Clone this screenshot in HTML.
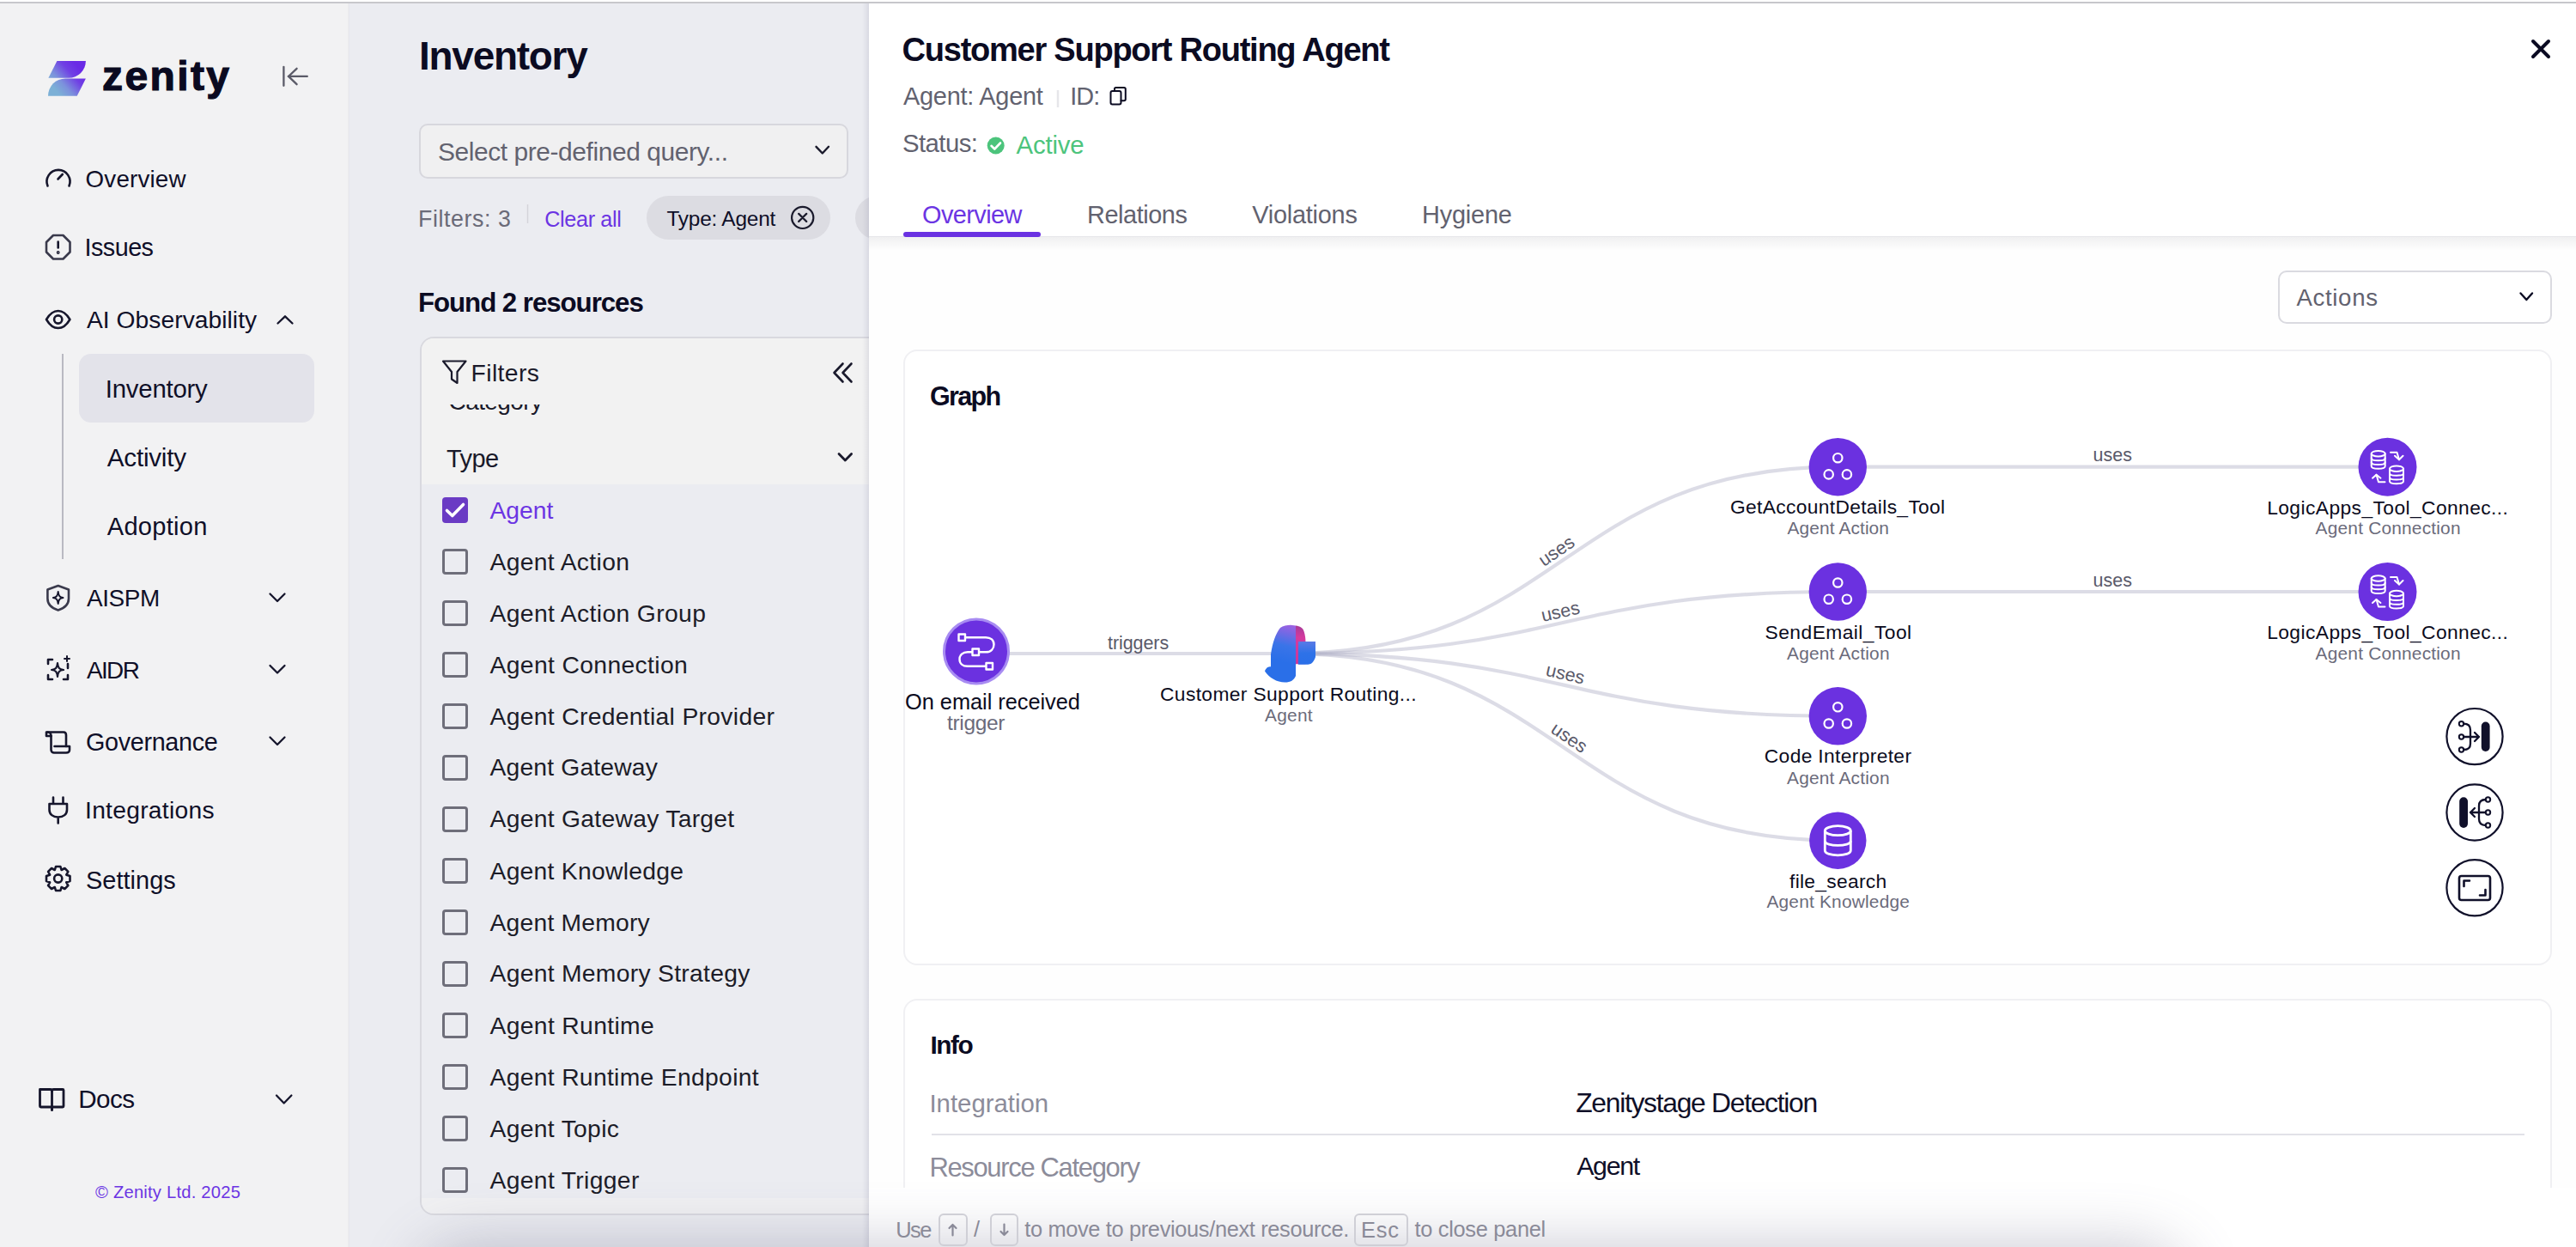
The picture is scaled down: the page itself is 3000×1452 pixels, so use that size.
<!DOCTYPE html>
<html><head><meta charset="utf-8">
<style>
html,body{margin:0;padding:0;}
body{width:3000px;height:1452px;overflow:hidden;position:relative;background:#fff;font-family:"Liberation Sans",sans-serif;}
.a{position:absolute;box-sizing:border-box;}
.t{position:absolute;white-space:nowrap;line-height:1;font-family:"Liberation Sans",sans-serif;}
svg{position:absolute;overflow:visible;}
</style></head><body>
<!-- top rule -->
<div class="a" style="left:0;top:2px;width:3000px;height:2px;background:#c7c7cb"></div>
<!-- sidebar -->
<div class="a" style="left:0;top:4px;width:406px;height:1448px;background:#f2f2f3"></div>
<!-- main -->
<div class="a" style="left:406px;top:4px;width:606px;height:1448px;background:#ebecf1"></div>
<div class="a" style="left:405px;top:4px;width:3px;height:1448px;background:linear-gradient(to right,rgba(0,0,0,0.03),rgba(0,0,0,0))"></div>
<!-- sidebar highlight & line -->
<div class="a" style="left:92px;top:412px;width:274px;height:80px;border-radius:14px;background:#e3e3ea"></div>
<div class="a" style="left:72px;top:412px;width:2px;height:239px;background:#b9b9c2"></div>
<!-- logo -->
<svg style="left:0;top:0" width="400" height="140" viewBox="0 0 400 140">
 <defs><linearGradient id="lg" gradientUnits="userSpaceOnUse" x1="92" y1="79" x2="64" y2="104">
  <stop offset="0" stop-color="#6a2ae6"/><stop offset="0.3" stop-color="#7040e4"/><stop offset="0.7" stop-color="#7c92dc"/><stop offset="1" stop-color="#7cb0d6"/></linearGradient></defs>
 <path d="M66.4 71 H99.9 A20 19.8 0 0 1 80 90.8 H56.4 Z" fill="url(#lg)"/>
 <path d="M89.7 111.7 H56 A20 20.3 0 0 1 76 91.4 H99.9 Z" fill="url(#lg)"/>
 <text x="119" y="104.7" font-family="Liberation Sans" font-weight="700" font-size="48" letter-spacing="2.4" fill="#0a0a20" stroke="#0a0a20" stroke-width="1.2">zenity</text>
 <g stroke="#5b5b68" stroke-width="2.3" stroke-linecap="round" fill="none">
  <path d="M330.4 77.8 V99.8"/><path d="M336 88.9 H357.8"/><path d="M345.6 79.8 L336 88.9 L345.6 98.2"/>
 </g>
</svg>
<!-- sidebar icons -->
<svg style="left:0;top:0" width="406" height="1452" viewBox="0 0 406 1452">
 <g stroke="#16162c" stroke-width="2.6" fill="none" stroke-linecap="round" stroke-linejoin="round">
  <!-- overview gauge -->
  <path d="M55.5 216.5 A13.5 13.5 0 1 1 80.5 216.5"/><path d="M67.5 208.5 L72.8 203"/>
  <!-- issues octagon -->
  <path d="M62 274 L73.5 274 L81.5 282 L81.5 293.5 L73.5 301.5 L62 301.5 L54 293.5 L54 282 Z" stroke="#3a3a4c"/>
  <path d="M67.7 281.5 V288.5"/><circle cx="67.7" cy="294" r="0.6" fill="#16162c"/>
  <!-- eye -->
  <path d="M54 372 C59 363.5 63 362 67.7 362 C72.4 362 76.4 363.5 81.4 372 C76.4 380.5 72.4 382 67.7 382 C63 382 59 380.5 54 372 Z"/>
  <circle cx="67.7" cy="372" r="4.6"/>
  <!-- chevron up -->
  <path d="M323.5 376.5 L332 368.3 L340.5 376.5" stroke-width="2.3"/>
  <!-- aispm shield -->
  <path d="M67.7 682 L80 686.5 V697 C80 704 74 708.5 67.7 710.5 C61.4 708.5 55.4 704 55.4 697 V686.5 Z" stroke="#3a3a4c"/>
  <path d="M67.7 689 C68.3 694 69.5 695.3 73.5 696 C69.5 696.7 68.3 698 67.7 703 C67.1 698 65.9 696.7 61.9 696 C65.9 695.3 67.1 694 67.7 689 Z" stroke-width="2"/>
  <!-- aidr -->
  <path d="M56 773 V768 H61 M56 786 V791 H61 M74 791 H79 V786 M79 778 V773" stroke-width="2.6"/>
  <path d="M67 772 C67.6 778 69 779.4 74 780 C69 780.6 67.6 782 67 788 C66.4 782 65 780.6 60 780 C65 779.4 66.4 778 67 772 Z" stroke-width="2.2"/>
  <path d="M78 764 V770 M75 767 H81" stroke-width="2"/>
  <!-- governance scroll -->
  <path d="M54 852.5 H74 C76.5 852.5 77 854 77 856 V869 H81 V873 C81 875.5 79.5 876.5 77 876.5 H63 C61 876.5 59.5 875 59.5 873 V857 H54 C54 854 54 852.5 54 852.5 Z"/>
  <path d="M59.5 857 C59.5 854.5 58 852.5 55.5 852.5"/><path d="M63.5 869 H77"/>
  <!-- integrations plug -->
  <path d="M62 928.5 V936 M73.5 928.5 V936 M57.5 936 H78 V943 C78 948 74 951.5 67.7 951.5 C61.5 951.5 57.5 948 57.5 943 Z M67.7 951.5 V958.5"/>
  <!-- settings gear -->
  <circle cx="67.7" cy="1023" r="4.6"/>
  <path d="M65 1009 H70.4 L71.6 1013 L75.4 1011 L79.3 1014.9 L77.3 1018.7 L81.5 1020 V1026 L77.3 1027.3 L79.3 1031.1 L75.4 1035 L71.6 1033 L70.4 1037 H65 L63.8 1033 L60 1035 L56.1 1031.1 L58.1 1027.3 L54 1026 V1020 L58.1 1018.7 L56.1 1014.9 L60 1011 L63.8 1013 Z"/>
  <!-- chevrons down -->
  <path d="M314.5 691.5 L323 700 L331.5 691.5" stroke-width="2.3"/>
  <path d="M314.5 775 L323 783.5 L331.5 775" stroke-width="2.3"/>
  <path d="M314.5 858.5 L323 867 L331.5 858.5" stroke-width="2.3"/>
  <path d="M322 1275.5 L330.7 1284.5 L339.4 1275.5" stroke-width="2.3"/>
  <!-- docs book -->
  <path d="M46.5 1268.5 H58.5 C59.8 1268.5 60.5 1269.3 60.5 1270.5 V1289 H47.5 C46.8 1289 46.5 1288.5 46.5 1288 Z" stroke-width="2.8"/>
  <path d="M60.5 1270.5 C60.5 1269.3 61.2 1268.5 62.5 1268.5 H73 C73.7 1268.5 74 1269 74 1269.5 V1288 C74 1288.5 73.7 1289 73 1289 H60.5" stroke-width="2.8"/>
  <path d="M60.5 1289 V1292.5" stroke-width="3"/>
 </g>
</svg>
<!-- main: dropdown -->
<div class="a" style="left:488px;top:144px;width:500px;height:64px;border:2px solid #d7d7dd;border-radius:10px;background:#f0f0f1"></div>

<div class="a" style="left:753px;top:228px;width:214px;height:51px;border-radius:26px;background:#dcdce2"></div>
<div class="a" style="left:996px;top:228px;width:60px;height:51px;border-radius:26px;background:#dcdce2"></div>
<!-- filter panel -->
<div class="a" style="left:489px;top:392px;width:620px;height:1023px;border:2px solid #d9d9df;border-radius:16px;background:#ebecf1;overflow:hidden">
  <div class="a" style="left:0;top:0;width:620px;height:170px;background:#f2f2f2"></div>
  <div class="a" style="left:0;top:1001px;width:620px;height:30px;background:#f0f0f2"></div>
</div>
<svg style="left:0;top:0" width="1012" height="600">
 <g stroke="#1a1a2c" stroke-width="2.4" fill="none" stroke-linecap="round" stroke-linejoin="round">
  <path d="M950.5 170.8 L957.8 178.5 L965 170.8"/>
  <!-- chip x icon -->
  <circle cx="934.7" cy="253.4" r="12.6" stroke-width="2.2"/>
  <path d="M930.2 248.9 L939.2 257.9 M939.2 248.9 L930.2 257.9" stroke-width="2.2"/>
  <!-- filter funnel -->
  <path d="M516 420.5 H542.5 L532.5 433 V446 L526 441.5 V433 Z" stroke-width="2.2"/>
  <!-- « -->
  <path d="M981.5 423.5 L971.5 434 L981.5 444.5 M991.5 423.5 L981.5 434 L991.5 444.5" stroke-width="2.6"/>
  <!-- type chevron -->
  <path d="M977 528.5 L984.3 536 L991.6 528.5" stroke-width="2.8"/>
 </g>
 <path d="M614.5 238 V260" stroke="#d4d4da" stroke-width="1.5"/>
</svg>
<div class="a" style="left:489px;top:471px;width:522px;height:30px;overflow:hidden">
 <div class="t" style="left:33.6px;top:-17.5px;font-size:28px;letter-spacing:-0.6px;color:#1a1a2a">Category</div>
</div>
<!-- checkboxes -->
<div class="a" style="left:515px;top:579px;width:30px;height:30px;border-radius:4px;background:#6a3bc4"></div>
<svg style="left:515px;top:579px" width="30" height="30"><path d="M5.5 15.5 L11.8 21.5 L24.5 8.5" stroke="#fff" stroke-width="3.6" fill="none" stroke-linecap="round" stroke-linejoin="round"/></svg>
<div class="a" style="left:515px;top:639px;width:30px;height:30px;border-radius:4px;border:3px solid #6e6e7a"></div>
<div class="a" style="left:515px;top:699px;width:30px;height:30px;border-radius:4px;border:3px solid #6e6e7a"></div>
<div class="a" style="left:515px;top:759px;width:30px;height:30px;border-radius:4px;border:3px solid #6e6e7a"></div>
<div class="a" style="left:515px;top:819px;width:30px;height:30px;border-radius:4px;border:3px solid #6e6e7a"></div>
<div class="a" style="left:515px;top:879px;width:30px;height:30px;border-radius:4px;border:3px solid #6e6e7a"></div>
<div class="a" style="left:515px;top:939px;width:30px;height:30px;border-radius:4px;border:3px solid #6e6e7a"></div>
<div class="a" style="left:515px;top:999px;width:30px;height:30px;border-radius:4px;border:3px solid #6e6e7a"></div>
<div class="a" style="left:515px;top:1059px;width:30px;height:30px;border-radius:4px;border:3px solid #6e6e7a"></div>
<div class="a" style="left:515px;top:1119px;width:30px;height:30px;border-radius:4px;border:3px solid #6e6e7a"></div>
<div class="a" style="left:515px;top:1179px;width:30px;height:30px;border-radius:4px;border:3px solid #6e6e7a"></div>
<div class="a" style="left:515px;top:1239px;width:30px;height:30px;border-radius:4px;border:3px solid #6e6e7a"></div>
<div class="a" style="left:515px;top:1299px;width:30px;height:30px;border-radius:4px;border:3px solid #6e6e7a"></div>
<div class="a" style="left:515px;top:1359px;width:30px;height:30px;border-radius:4px;border:3px solid #6e6e7a"></div>
<!-- main bottom shadow -->

<!-- PANEL -->
<div class="a" style="left:1004px;top:4px;width:8px;height:1448px;background:linear-gradient(to right,rgba(120,120,150,0),rgba(120,120,150,0.07) 50%,rgba(120,120,150,0.16))"></div>
<div class="a" style="left:1012px;top:4px;width:1988px;height:1448px;background:#fefefe"></div>
<div class="a" style="left:1012px;top:276px;width:1988px;height:16px;background:linear-gradient(to bottom,rgba(0,0,20,0.055),rgba(0,0,20,0))"></div>
<div class="a" style="left:1012px;top:4px;width:1988px;height:272px;background:#fff;border-bottom:1px solid #e6e6ea"></div>
<div class="a" style="left:1052px;top:270px;width:160px;height:6px;border-radius:3px;background:#6a32e2"></div>
<div class="a" style="left:2653px;top:315px;width:319px;height:62px;border:2px solid #dadae0;border-radius:10px;background:#fff"></div>
<div class="a" style="left:1052px;top:407px;width:1920px;height:717px;border:2px solid #f0f0f3;border-radius:16px;background:#fff"></div>
<div class="a" style="left:1052px;top:1163px;width:1920px;height:400px;border:2px solid #f0f0f3;border-radius:16px;background:#fff"></div>
<div class="a" style="left:1085px;top:1320px;width:1855px;height:2px;background:#e2e2e8"></div>
<svg style="left:0;top:0" width="3000" height="420">
 <g stroke="#0b0b22" fill="none" stroke-linecap="round" stroke-linejoin="round">
  <path d="M2950 48 L2968 66 M2968 48 L2950 66" stroke-width="4"/>
  <path d="M2935.5 341.5 L2942.3 349 L2949 341.5" stroke-width="2.4"/>
  <!-- copy icon -->
  <rect x="1293.5" y="106" width="12" height="15.5" rx="2" stroke-width="2"/>
  <path d="M1298 106 V103.5 C1298 102.5 1298.5 102 1299.5 102 H1309 C1310 102 1310.8 102.7 1310.8 103.7 V115.5 C1310.8 116.5 1310 117.3 1309 117.3 H1305.5" stroke-width="2"/>
 </g>
 <path d="M1232 105 V125" stroke="#e6e6ea" stroke-width="2.5"/>
 <circle cx="1159.7" cy="169.5" r="10" fill="#4cc47c"/>
 <path d="M1154.5 169.8 L1158.3 173.5 L1165 166.5" stroke="#fff" stroke-width="2.6" fill="none" stroke-linecap="round" stroke-linejoin="round"/>
</svg>
<!-- GRAPH -->
<svg style="left:0;top:0" width="3000" height="1452" viewBox="0 0 3000 1452">
<path d="M1137 761 H1500" stroke="#b2b2c8" stroke-opacity="0.45" stroke-width="4.2" fill="none"/>
<path d="M1500 761 C1820.15 761 1820.15 543.7 2140.3 543.7" stroke="#b2b2c8" stroke-opacity="0.45" stroke-width="4.2" fill="none"/>
<path d="M1500 761 C1820.15 761 1820.15 689 2140.3 689" stroke="#b2b2c8" stroke-opacity="0.45" stroke-width="4.2" fill="none"/>
<path d="M1500 761 C1820.15 761 1820.15 833.8 2140.3 833.8" stroke="#b2b2c8" stroke-opacity="0.45" stroke-width="4.2" fill="none"/>
<path d="M1500 761 C1820.15 761 1820.15 978.7 2140.3 978.7" stroke="#b2b2c8" stroke-opacity="0.45" stroke-width="4.2" fill="none"/>
<path d="M2140.3 543.7 H2780" stroke="#b2b2c8" stroke-opacity="0.45" stroke-width="4.2" fill="none"/>
<path d="M2140.3 689 H2780" stroke="#b2b2c8" stroke-opacity="0.45" stroke-width="4.2" fill="none"/>
<text x="1812.8" y="641.6" transform="rotate(-34.18 1812.8 641.6)" text-anchor="middle" dominant-baseline="central" font-family="Liberation Sans" font-size="21.5" fill="#5a5a6a">uses</text>
<text x="1817.3" y="712.3" transform="rotate(-12.68 1817.3 712.3)" text-anchor="middle" dominant-baseline="central" font-family="Liberation Sans" font-size="21.5" fill="#5a5a6a">uses</text>
<text x="1823.0" y="784.7" transform="rotate(12.82 1823.0 784.7)" text-anchor="middle" dominant-baseline="central" font-family="Liberation Sans" font-size="21.5" fill="#5a5a6a">uses</text>
<text x="1827.5" y="859.1" transform="rotate(34.23 1827.5 859.1)" text-anchor="middle" dominant-baseline="central" font-family="Liberation Sans" font-size="21.5" fill="#5a5a6a">uses</text>
<circle cx="1137" cy="758.4" r="37.5" fill="#6b31e0" stroke="#a88cf2" stroke-width="3"/>
<g stroke="#fff" stroke-width="2.4" fill="none" stroke-linejoin="round"><rect x="1116.5" y="738.5" width="7.5" height="7.5"/><rect x="1132.5" y="755.5" width="7.5" height="7.5"/><rect x="1148.5" y="772" width="7.5" height="7.5"/><path d="M1124 742.3 H1148 C1154 742.3 1157.5 745.5 1157.5 750.5 C1157.5 755.5 1154 759.3 1148 759.3 H1140"/><path d="M1132.5 759.3 H1127 C1121 759.3 1117.5 763 1117.5 767.5 C1117.5 772.5 1121 775.8 1127 775.8 H1148.5"/></g>
<defs><linearGradient id="ag1" gradientUnits="userSpaceOnUse" x1="1500" y1="728" x2="1490" y2="770"><stop offset="0" stop-color="#9a62e2"/><stop offset="0.55" stop-color="#3a74e8"/><stop offset="1" stop-color="#2a6fe8"/></linearGradient><linearGradient id="ag2" gradientUnits="userSpaceOnUse" x1="0" y1="729" x2="0" y2="773"><stop offset="0" stop-color="#a83a98"/><stop offset="0.3" stop-color="#d53a9e"/><stop offset="1" stop-color="#c8389c"/></linearGradient><linearGradient id="ag3" gradientUnits="userSpaceOnUse" x1="0" y1="747" x2="0" y2="774"><stop offset="0" stop-color="#5a7ae6"/><stop offset="0.5" stop-color="#2e72e8"/><stop offset="1" stop-color="#2a6fe8"/></linearGradient></defs>
<path d="M1509 728.5 C1514 729 1517 731 1518.5 735 C1520 739 1520.5 744 1520.5 748 V773.2 H1506 Z" fill="url(#ag2)"/>
<path d="M1491 731 C1494 728.5 1499 727.8 1503 727.8 L1509 728.5 V787 C1507 792 1503 794.6 1496.5 794.6 C1487 794.6 1478 789 1473 781.5 C1474.5 777.5 1477 776.3 1480 776.3 V762 C1482 748 1486 737 1491 731 Z" fill="url(#ag1)"/>
<path d="M1512 747 H1532 V765 C1530 771 1527 773.7 1523 773.7 H1512 Z" fill="url(#ag3)"/>
<circle cx="2140.3" cy="543.7" r="33.7" fill="#6b31e0"/>
<g stroke="#fff" stroke-width="2.2" fill="none"><circle cx="2140.3" cy="533.2" r="5.2"/><circle cx="2129.7000000000003" cy="552.4000000000001" r="5.2"/><circle cx="2150.9" cy="552.4000000000001" r="5.2"/></g>
<circle cx="2140.3" cy="689" r="33.7" fill="#6b31e0"/>
<g stroke="#fff" stroke-width="2.2" fill="none"><circle cx="2140.3" cy="678.5" r="5.2"/><circle cx="2129.7000000000003" cy="697.7" r="5.2"/><circle cx="2150.9" cy="697.7" r="5.2"/></g>
<circle cx="2140.3" cy="833.8" r="33.7" fill="#6b31e0"/>
<g stroke="#fff" stroke-width="2.2" fill="none"><circle cx="2140.3" cy="823.3" r="5.2"/><circle cx="2129.7000000000003" cy="842.5" r="5.2"/><circle cx="2150.9" cy="842.5" r="5.2"/></g>
<circle cx="2140.3" cy="978.7" r="33.2" fill="#6b31e0"/>
<g stroke="#fff" stroke-width="2.8" fill="none"><ellipse cx="2140.3" cy="967.2" rx="15" ry="5.5"/><path d="M2125.3 967.2 V990.2 C2125.3 997.7 2155.3 997.7 2155.3 990.2 V967.2"/><path d="M2125.3 979.2 C2125.3 986.2 2155.3 986.2 2155.3 979.2"/></g>
<circle cx="2780.5" cy="543.7" r="34" fill="#6b31e0"/>
<g stroke="#fff" stroke-width="2" fill="none" stroke-linecap="round" stroke-linejoin="round"><ellipse cx="2769.7" cy="528.2" rx="8" ry="3.2"/><path d="M2761.7 528.2 V542.7 C2761.7 546.7 2777.7 546.7 2777.7 542.7 V528.2"/><path d="M2761.7 533.4000000000001 C2761.7 537.2 2777.7 537.2 2777.7 533.4000000000001"/><path d="M2761.7 538.2 C2761.7 542.0 2777.7 542.0 2777.7 538.2"/><ellipse cx="2791.0" cy="545.7" rx="8" ry="3.2"/><path d="M2783.0 545.7 V560.2 C2783.0 564.2 2799.0 564.2 2799.0 560.2 V545.7"/><path d="M2783.0 550.9000000000001 C2783.0 554.7 2799.0 554.7 2799.0 550.9000000000001"/><path d="M2783.0 555.7 C2783.0 559.5 2799.0 559.5 2799.0 555.7"/><path d="M2784.0 526.7 H2791.5 L2794.0 535.2"/><path d="M2789.0 530.7 L2794.0 535.2 L2798.5 530.7"/><path d="M2777.5 561.2 H2770.0 L2767.5 552.7"/><path d="M2772.5 556.7 L2767.5 552.7 L2763.0 556.7"/></g>
<circle cx="2780.5" cy="689" r="34" fill="#6b31e0"/>
<g stroke="#fff" stroke-width="2" fill="none" stroke-linecap="round" stroke-linejoin="round"><ellipse cx="2769.7" cy="673.5" rx="8" ry="3.2"/><path d="M2761.7 673.5 V688 C2761.7 692 2777.7 692 2777.7 688 V673.5"/><path d="M2761.7 678.7 C2761.7 682.5 2777.7 682.5 2777.7 678.7"/><path d="M2761.7 683.5 C2761.7 687.3 2777.7 687.3 2777.7 683.5"/><ellipse cx="2791.0" cy="691.0" rx="8" ry="3.2"/><path d="M2783.0 691.0 V705.5 C2783.0 709.5 2799.0 709.5 2799.0 705.5 V691.0"/><path d="M2783.0 696.2 C2783.0 700.0 2799.0 700.0 2799.0 696.2"/><path d="M2783.0 701.0 C2783.0 704.8 2799.0 704.8 2799.0 701.0"/><path d="M2784.0 672 H2791.5 L2794.0 680.5"/><path d="M2789.0 676 L2794.0 680.5 L2798.5 676"/><path d="M2777.5 706.5 H2770.0 L2767.5 698"/><path d="M2772.5 702 L2767.5 698 L2763.0 702"/></g>
<circle cx="2882" cy="857.6" r="32.6" fill="#fff" stroke="#10102a" stroke-width="2.2"/>
<circle cx="2882" cy="946" r="32.6" fill="#fff" stroke="#10102a" stroke-width="2.2"/>
<circle cx="2882" cy="1033.8" r="32.6" fill="#fff" stroke="#10102a" stroke-width="2.2"/>
<g stroke="#10102a" fill="none" stroke-linecap="round" stroke-linejoin="round"><rect x="2889.8" y="840.5" width="9.8" height="34.5" rx="4.9" fill="#10102a" stroke="none"/><path d="M2869 842.7 C2874 842.7 2877 845 2877 850 V866 C2877 871 2874 873 2869 873" stroke-width="2.3"/><path d="M2869 858 H2887 M2882 853 L2887 858 L2882 863" stroke-width="2.3"/><circle cx="2866.5" cy="842.7" r="2.7" stroke-width="2"/><circle cx="2866.5" cy="858" r="2.7" stroke-width="2"/><circle cx="2866.5" cy="873" r="2.7" stroke-width="2"/><rect x="2864.2" y="928.2" width="9.8" height="35.8" rx="4.9" fill="#10102a" stroke="none"/><path d="M2895 931 C2890 931 2887 933.5 2887 938.5 V953.5 C2887 958.5 2890 961 2895 961" stroke-width="2.3"/><path d="M2895 946 H2877 M2882 941 L2877 946 L2882 951" stroke-width="2.3"/><circle cx="2897.5" cy="931" r="2.7" stroke-width="2"/><circle cx="2897.5" cy="946" r="2.7" stroke-width="2"/><circle cx="2897.5" cy="961" r="2.7" stroke-width="2"/><rect x="2864" y="1020" width="36" height="28" rx="2.5" stroke-width="2.6"/><path d="M2869.5 1032 V1025.5 H2876" stroke-width="2.6"/><path d="M2894.5 1036 V1042.5 H2888" stroke-width="2.6"/></g>
</svg>
<!-- bottom bar -->
<div class="a" style="left:1012px;top:1383px;width:1988px;height:69px;background:#fff"></div>
<div class="a" style="left:406px;top:1300px;width:2594px;height:152px;overflow:hidden">
 <div class="a" style="left:110px;top:178px;width:2000px;height:60px;border-radius:30px;box-shadow:0 0 70px 28px rgba(95,95,125,0.33);background:rgba(95,95,125,0.33)"></div>
</div>
<div class="a" style="left:1092.5px;top:1413px;width:34px;height:38px;border:2px solid #cfcfd6;border-radius:6px"></div>
<div class="a" style="left:1153px;top:1413px;width:33px;height:38px;border:2px solid #cfcfd6;border-radius:6px"></div>
<div class="a" style="left:1576.5px;top:1413px;width:63px;height:38px;border:2px solid #cfcfd6;border-radius:6px"></div>
<svg style="left:0;top:0" width="3000" height="1452">
 <g stroke="#8a8a98" stroke-width="2.2" fill="none" stroke-linecap="round" stroke-linejoin="round">
  <path d="M1109.5 1438.5 V1426 M1105.5 1430 L1109.5 1426 L1113.5 1430"/>
  <path d="M1169.5 1425.5 V1438 M1165.5 1434 L1169.5 1438 L1173.5 1434"/>
 </g>
</svg>
<div class="t" id="s_over" style="left:99.60px;top:194.52px;font-size:27.76px;letter-spacing:0.176px;color:#0f0f28;">Overview</div>
<div class="t" id="s_iss" style="left:98.60px;top:274.44px;font-size:28.78px;letter-spacing:-0.554px;color:#0f0f28;">Issues</div>
<div class="t" id="s_aio" style="left:101.00px;top:357.80px;font-size:28.20px;letter-spacing:0.051px;color:#0f0f28;">AI Observability</div>
<div class="t" id="s_inv" style="left:122.80px;top:437.55px;font-size:29.36px;letter-spacing:-0.220px;color:#0f0f28;">Inventory</div>
<div class="t" id="s_act" style="left:124.80px;top:518.01px;font-size:29.65px;letter-spacing:-0.244px;color:#0f0f28;">Activity</div>
<div class="t" id="s_ado" style="left:124.80px;top:599.17px;font-size:29.07px;letter-spacing:0.262px;color:#0f0f28;">Adoption</div>
<div class="t" id="s_aispm" style="left:101.00px;top:682.94px;font-size:27.91px;letter-spacing:-0.412px;color:#0f0f28;">AISPM</div>
<div class="t" id="s_aidr" style="left:101.00px;top:766.98px;font-size:27.91px;letter-spacing:-1.623px;color:#0f0f28;">AIDR</div>
<div class="t" id="s_gov" style="left:100.00px;top:849.58px;font-size:28.78px;letter-spacing:-0.332px;color:#0f0f28;">Governance</div>
<div class="t" id="s_int" style="left:99.00px;top:929.40px;font-size:28.20px;letter-spacing:0.294px;color:#0f0f28;">Integrations</div>
<div class="t" id="s_set" style="left:100.00px;top:1010.60px;font-size:28.92px;letter-spacing:0.042px;color:#0f0f28;">Settings</div>
<div class="t" id="s_docs" style="left:91.20px;top:1264.50px;font-size:29.65px;letter-spacing:-0.582px;color:#0f0f28;">Docs</div>
<div class="t" id="s_copy" style="left:111.00px;top:1378.16px;font-size:20.20px;letter-spacing:0.213px;color:#6b35e3;">© Zenity Ltd. 2025</div>
<div class="t" id="m_inv" style="left:488.00px;top:42.92px;font-size:45.93px;letter-spacing:-1.241px;color:#0b0b22;font-weight:700;">Inventory</div>
<div class="t" id="m_sel" style="left:510.00px;top:161.93px;font-size:29.94px;letter-spacing:-0.422px;color:#62626f;">Select pre-defined query...</div>
<div class="t" id="m_f3" style="left:487.00px;top:241.70px;font-size:26.78px;letter-spacing:0.592px;color:#6a6a78;">Filters: 3</div>
<div class="t" id="m_clr" style="left:634.20px;top:243.23px;font-size:25.24px;letter-spacing:-0.362px;color:#6b35e3;">Clear all</div>
<div class="t" id="m_chip" style="left:776.40px;top:243.15px;font-size:24.41px;letter-spacing:-0.192px;color:#0f0f28;">Type: Agent</div>
<div class="t" id="m_found" style="left:487.00px;top:336.58px;font-size:31.25px;letter-spacing:-1.050px;color:#0b0b22;font-weight:700;">Found 2 resources</div>
<div class="t" id="m_fil" style="left:548.50px;top:419.88px;font-size:28.31px;letter-spacing:0.406px;color:#1a1a2a;">Filters</div>
<div class="t" id="m_type" style="left:520.00px;top:519.53px;font-size:29.01px;letter-spacing:-0.564px;color:#1a1a2a;">Type</div>
<div class="t" id="f0" style="left:570.50px;top:579.98px;font-size:28.31px;letter-spacing:-0.020px;color:#6b35e3;">Agent</div>
<div class="t" id="f1" style="left:570.50px;top:639.88px;font-size:28.31px;letter-spacing:0.321px;color:#1c1c28;">Agent Action</div>
<div class="t" id="f2" style="left:570.50px;top:699.88px;font-size:28.31px;letter-spacing:0.351px;color:#1c1c28;">Agent Action Group</div>
<div class="t" id="f3" style="left:570.50px;top:759.88px;font-size:28.31px;letter-spacing:0.354px;color:#1c1c28;">Agent Connection</div>
<div class="t" id="f4" style="left:570.50px;top:819.88px;font-size:28.31px;letter-spacing:0.308px;color:#1c1c28;">Agent Credential Provider</div>
<div class="t" id="f5" style="left:570.50px;top:879.41px;font-size:28.31px;letter-spacing:0.161px;color:#1c1c28;">Agent Gateway</div>
<div class="t" id="f6" style="left:570.50px;top:939.41px;font-size:28.31px;letter-spacing:0.277px;color:#1c1c28;">Agent Gateway Target</div>
<div class="t" id="f7" style="left:570.50px;top:999.88px;font-size:28.31px;letter-spacing:0.254px;color:#1c1c28;">Agent Knowledge</div>
<div class="t" id="f8" style="left:570.50px;top:1059.98px;font-size:28.31px;letter-spacing:0.201px;color:#1c1c28;">Agent Memory</div>
<div class="t" id="f9" style="left:570.50px;top:1119.41px;font-size:28.31px;letter-spacing:0.280px;color:#1c1c28;">Agent Memory Strategy</div>
<div class="t" id="f10" style="left:570.50px;top:1179.88px;font-size:28.31px;letter-spacing:0.334px;color:#1c1c28;">Agent Runtime</div>
<div class="t" id="f11" style="left:570.50px;top:1239.88px;font-size:28.31px;letter-spacing:0.304px;color:#1c1c28;">Agent Runtime Endpoint</div>
<div class="t" id="f12" style="left:570.50px;top:1299.88px;font-size:28.31px;letter-spacing:0.305px;color:#1c1c28;">Agent Topic</div>
<div class="t" id="f13" style="left:570.50px;top:1359.88px;font-size:28.31px;letter-spacing:0.328px;color:#1c1c28;">Agent Trigger</div>
<div class="t" id="p_title" style="left:1050.60px;top:38.54px;font-size:38.08px;letter-spacing:-1.287px;color:#0b0b22;font-weight:700;">Customer Support Routing Agent</div>
<div class="t" id="p_aa" style="left:1052.00px;top:98.02px;font-size:28.92px;letter-spacing:-0.241px;color:#62626f;">Agent: Agent</div>
<div class="t" id="p_id" style="left:1246.20px;top:98.02px;font-size:28.92px;letter-spacing:-0.983px;color:#62626f;">ID:</div>
<div class="t" id="p_st" style="left:1051.00px;top:152.47px;font-size:29.36px;letter-spacing:-0.567px;color:#62626f;">Status:</div>
<div class="t" id="p_act" style="left:1183.60px;top:154.09px;font-size:29.36px;letter-spacing:-0.190px;color:#4cc47c;">Active</div>
<div class="t" id="p_t1" style="left:1074.00px;top:236.30px;font-size:28.92px;letter-spacing:-0.574px;color:#6b35e3;">Overview</div>
<div class="t" id="p_t2" style="left:1266.00px;top:236.30px;font-size:28.92px;letter-spacing:-0.448px;color:#62626f;">Relations</div>
<div class="t" id="p_t3" style="left:1458.20px;top:236.30px;font-size:28.92px;letter-spacing:-0.233px;color:#62626f;">Violations</div>
<div class="t" id="p_t4" style="left:1656.00px;top:236.30px;font-size:28.92px;letter-spacing:-0.187px;color:#62626f;">Hygiene</div>
<div class="t" id="p_actions" style="left:2674.40px;top:332.56px;font-size:27.62px;letter-spacing:0.674px;color:#62626f;">Actions</div>
<div class="t" id="p_graph" style="left:1083.00px;top:445.77px;font-size:30.52px;letter-spacing:-1.673px;color:#0b0b22;font-weight:700;">Graph</div>
<div class="t" id="p_info" style="left:1083.40px;top:1201.77px;font-size:29.80px;letter-spacing:-1.406px;color:#0b0b22;font-weight:700;">Info</div>
<div class="t" id="p_i1" style="left:1082.40px;top:1270.49px;font-size:29.36px;letter-spacing:0.004px;color:#8c8c9a;">Integration</div>
<div class="t" id="p_v1" style="left:1835.20px;top:1269.02px;font-size:31.83px;letter-spacing:-1.294px;color:#0f0f28;">Zenitystage Detection</div>
<div class="t" id="p_i2" style="left:1082.40px;top:1344.76px;font-size:30.96px;letter-spacing:-1.320px;color:#8c8c9a;">Resource Category</div>
<div class="t" id="p_v2" style="left:1836.20px;top:1342.19px;font-size:30.38px;letter-spacing:-1.344px;color:#0f0f28;">Agent</div>
<div class="t" id="b_use" style="left:1043.20px;top:1419.97px;font-size:25.44px;letter-spacing:-1.513px;color:#8a8a98;">Use</div>
<div class="t" id="b_sl" style="left:1134.00px;top:1419.25px;font-size:25.40px;letter-spacing:15.939px;color:#8a8a98;">/</div>
<div class="t" id="b_mv" style="left:1193.20px;top:1419.25px;font-size:25.40px;letter-spacing:-0.347px;color:#8a8a98;">to move to previous/next resource.</div>
<div class="t" id="b_esc" style="left:1585.00px;top:1419.97px;font-size:25.44px;letter-spacing:0.799px;color:#8a8a98;">Esc</div>
<div class="t" id="b_cl" style="left:1647.60px;top:1419.25px;font-size:25.40px;letter-spacing:-0.319px;color:#8a8a98;">to close panel</div>
<div class="t" id="g_trig" style="left:1054.10px;top:805.31px;font-size:25.38px;letter-spacing:-0.042px;color:#0b0b20;">On email received</div>
<div class="t" id="g_trig2" style="left:1103.00px;top:830.34px;font-size:24.50px;letter-spacing:-0.343px;color:#6b6b7b;">trigger</div>
<div class="t" id="g_triggers" style="left:1290.00px;top:738.63px;font-size:21.50px;letter-spacing:-0.072px;color:#5a5a6a;">triggers</div>
<div class="t" id="g_agent" style="left:1351.00px;top:797.17px;font-size:22.80px;letter-spacing:0.371px;color:#0b0b20;">Customer Support Routing...</div>
<div class="t" id="g_agent2" style="left:1473.00px;top:822.73px;font-size:20.90px;letter-spacing:0.247px;color:#6b6b7b;">Agent</div>
<div class="t" id="g_n1" style="left:2015.00px;top:579.17px;font-size:22.80px;letter-spacing:0.328px;color:#0b0b20;">GetAccountDetails_Tool</div>
<div class="t" id="g_n1t" style="left:2081.60px;top:605.36px;font-size:20.90px;letter-spacing:0.095px;color:#6b6b7b;">Agent Action</div>
<div class="t" id="g_n2" style="left:2055.60px;top:725.17px;font-size:22.80px;letter-spacing:0.448px;color:#0b0b20;">SendEmail_Tool</div>
<div class="t" id="g_n2t" style="left:2081.00px;top:750.56px;font-size:20.90px;letter-spacing:0.204px;color:#6b6b7b;">Agent Action</div>
<div class="t" id="g_n3" style="left:2054.80px;top:869.17px;font-size:22.80px;letter-spacing:0.345px;color:#0b0b20;">Code Interpreter</div>
<div class="t" id="g_n3t" style="left:2081.00px;top:896.16px;font-size:20.90px;letter-spacing:0.204px;color:#6b6b7b;">Agent Action</div>
<div class="t" id="g_n4" style="left:2084.00px;top:1014.74px;font-size:22.80px;letter-spacing:0.294px;color:#0b0b20;">file_search</div>
<div class="t" id="g_n4t" style="left:2057.40px;top:1039.91px;font-size:20.90px;letter-spacing:0.197px;color:#6b6b7b;">Agent Knowledge</div>
<div class="t" id="g_c1" style="left:2640.20px;top:579.77px;font-size:22.80px;letter-spacing:0.415px;color:#0b0b20;">LogicApps_Tool_Connec...</div>
<div class="t" id="g_c1t" style="left:2696.60px;top:605.36px;font-size:20.90px;letter-spacing:0.190px;color:#6b6b7b;">Agent Connection</div>
<div class="t" id="g_c2" style="left:2640.20px;top:725.17px;font-size:22.80px;letter-spacing:0.415px;color:#0b0b20;">LogicApps_Tool_Connec...</div>
<div class="t" id="g_c2t" style="left:2696.60px;top:750.56px;font-size:20.90px;letter-spacing:0.190px;color:#6b6b7b;">Agent Connection</div>
<div class="t" id="g_u1" style="left:2437.40px;top:520.37px;font-size:21.50px;letter-spacing:0.031px;color:#5a5a6a;">uses</div>
<div class="t" id="g_u2" style="left:2437.40px;top:665.57px;font-size:21.50px;letter-spacing:0.031px;color:#5a5a6a;">uses</div>
</body></html>
